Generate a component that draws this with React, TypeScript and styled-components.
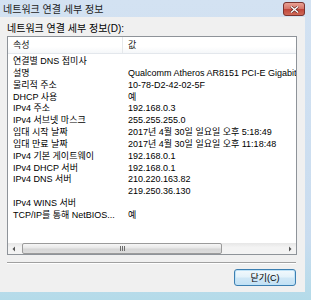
import React from 'react'
import styled, { createGlobalStyle } from 'styled-components'

const GlobalStyle = createGlobalStyle`
  html, body {
    margin: 0;
    padding: 0;
    background: #c8dcef;
  }
  body {
    font-family: 'Liberation Sans', 'Noto Sans CJK KR', sans-serif;
    font-size: 9px;
    color: #000;
  }
`

const rows: [string, string][] = [
  ['연결별 DNS 접미사', ''],
  ['설명', 'Qualcomm Atheros AR8151 PCI-E Gigabit Ethernet Controller (NDIS 6.20)'],
  ['물리적 주소', '10-78-D2-42-02-5F'],
  ['DHCP 사용', '예'],
  ['IPv4 주소', '192.168.0.3'],
  ['IPv4 서브넷 마스크', '255.255.255.0'],
  ['임대 시작 날짜', '2017년 4월 30일 일요일 오후 5:18:49'],
  ['임대 만료 날짜', '2017년 4월 30일 일요일 오후 11:18:48'],
  ['IPv4 기본 게이트웨이', '192.168.0.1'],
  ['IPv4 DHCP 서버', '192.168.0.1'],
  ['IPv4 DNS 서버', '210.220.163.82'],
  ['', '219.250.36.130'],
  ['IPv4 WINS 서버', ''],
  ['TCP/IP를 통해 NetBIOS...', '예'],
]

const Window = styled.div`
  width: 311px;
  height: 300px;
  display: flex;
  flex-direction: column;
  background: linear-gradient(to bottom, #d3e2f2 0%, #c9dcef 80%, #b4dbe9 100%);
  overflow: hidden;
`

const TitleBar = styled.div`
  height: 17px;
  display: flex;
  align-items: center;
  padding: 0 6px 0 3px;
  flex: none;
`

const Title = styled.span`
  flex: 1;
  font-size: 10px;
  color: #222;
`

const CloseButton = styled.span`
  display: inline-flex;
  align-items: center;
  justify-content: center;
  flex: 0 0 22px;
  width: 22px;
  height: 14px;
  margin-top: 1px;
  border: 1px solid #7a3430;
  border-radius: 3px;
  box-sizing: border-box;
  background-color: #c9574b;
  background-image: linear-gradient(to bottom, #e9a194 0%, #d6766a 48%, #c0453a 52%, #cf6a58 100%);
`

const Body = styled.div`
  flex: 1;
  display: flex;
  padding: 0 6px 8px 0;
  min-height: 0;
  min-width: 0;
`

const Client = styled.div`
  flex: 1;
  min-width: 0;
  background: #f0f0f0;
  display: flex;
  flex-direction: column;
  padding: 0 8px 0 7px;
`

const Label = styled.div`
  height: 13px;
  margin-top: 5px;
  line-height: 13px;
  font-size: 10px;
`

const ListBox = styled.div`
  margin-top: 1px;
  height: 217px;
  min-width: 0;
  border: 1px solid #8e9399;
  background: #fff;
  display: flex;
  flex-direction: column;
  overflow: hidden;
`

const Header = styled.div`
  height: 16px;
  flex: none;
  display: grid;
  grid-template-columns: 115px minmax(0, 1fr);
  border-bottom: 1px solid #e3e7ec;
  background: linear-gradient(to bottom, #ffffff 0%, #ffffff 60%, #f5f7f9 100%);
`

const HeaderCell = styled.div<{ $sep?: boolean }>`
  padding-left: 5px;
  line-height: 16px;
  border-right: ${(p) => (p.$sep ? '1px solid #e5e8eb' : 'none')};
  color: #1a1a1a;
`

const Rows = styled.div`
  flex: 1;
  padding-top: 1px;
  min-width: 0;
`

const Row = styled.div`
  display: grid;
  grid-template-columns: 115px minmax(0, 1fr);
  height: 11.85px;
  line-height: 12px;
  white-space: nowrap;
`

const Cell = styled.div`
  padding-left: 5px;
  overflow: hidden;
`

const ValueCell = styled.div`
  padding-left: 5px;
  overflow: hidden;
`

const ScrollBar = styled.div`
  height: 11px;
  flex: none;
  display: flex;
  align-items: stretch;
  background: linear-gradient(to bottom, #e6e6e6, #f3f3f3 40%, #f3f3f3);
`

const ArrowButton = styled.div`
  width: 13px;
  flex: none;
  display: flex;
  align-items: center;
  justify-content: center;
`

const Track = styled.div`
  flex: 1;
  display: flex;
  padding: 0 1px;
`

const Thumb = styled.div`
  width: 200px;
  box-sizing: border-box;
  border: 1px solid #9b9b9b;
  border-radius: 2px;
  background: linear-gradient(to bottom, #f6f6f6 0%, #e8e8e8 45%, #d6d6d6 55%, #dcdcdc 100%);
  display: flex;
  align-items: center;
  justify-content: center;
`

const Grip = styled.div`
  display: flex;
  gap: 1px;
  span {
    width: 1px;
    height: 5px;
    background: #6d6d6d;
  }
`

const Separator = styled.div`
  margin-top: 7px;
  margin-right: 1px;
  border-top: 1px solid #a0a0a0;
  border-bottom: 1px solid #fff;
  height: 0;
`

const Footer = styled.div`
  flex: 1;
  display: flex;
  justify-content: flex-end;
  align-items: flex-start;
  padding-top: 5px;
`

const Button = styled.button`
  width: 62px;
  height: 17px;
  margin-right: 1px;
  padding: 0;
  border: 1px solid #3c7fb1;
  border-radius: 3px;
  background: linear-gradient(to bottom, #f2f9fd 0%, #e4f2fa 45%, #cfe7f6 55%, #c3e1f4 100%);
  box-shadow: inset 0 0 0 1px #bfe2f7;
  font-family: 'Liberation Sans', 'Noto Sans CJK KR', sans-serif;
  font-size: 9px;
  color: #000;
`

const LeftArrow = () => (
  <svg width="5" height="6" viewBox="0 0 5 6">
    <path d="M3 0.5 L0.5 3 L3 5.5 Z" fill="#555" />
  </svg>
)

const RightArrow = () => (
  <svg width="5" height="6" viewBox="0 0 5 6">
    <path d="M2 0.5 L4.5 3 L2 5.5 Z" fill="#555" />
  </svg>
)

const App = () => {
  return (
    <>
      <GlobalStyle />
      <Window>
        <TitleBar>
          <Title>네트워크 연결 세부 정보</Title>
          <CloseButton>
            <svg width="9" height="7" viewBox="0 0 9 7">
              <path d="M1 0.5 L8 6.5 M8 0.5 L1 6.5" stroke="#5a2420" strokeWidth="2.6" />
              <path d="M1 0.5 L8 6.5 M8 0.5 L1 6.5" stroke="#fff" strokeWidth="1.4" />
            </svg>
          </CloseButton>
        </TitleBar>
        <Body>
          <Client>
            <Label>네트워크 연결 세부 정보(D):</Label>
            <ListBox>
              <Header>
                <HeaderCell $sep>속성</HeaderCell>
                <HeaderCell>값</HeaderCell>
              </Header>
              <Rows>
                {rows.map(([name, value], i) => (
                  <Row key={i}>
                    <Cell>{name}</Cell>
                    <ValueCell>{value}</ValueCell>
                  </Row>
                ))}
              </Rows>
              <ScrollBar>
                <ArrowButton>
                  <LeftArrow />
                </ArrowButton>
                <Track>
                  <Thumb>
                    <Grip>
                      <span />
                      <span />
                      <span />
                    </Grip>
                  </Thumb>
                </Track>
                <ArrowButton>
                  <RightArrow />
                </ArrowButton>
              </ScrollBar>
            </ListBox>
            <Separator />
            <Footer>
              <Button>닫기(C)</Button>
            </Footer>
          </Client>
        </Body>
      </Window>
    </>
  )
}

export default App
